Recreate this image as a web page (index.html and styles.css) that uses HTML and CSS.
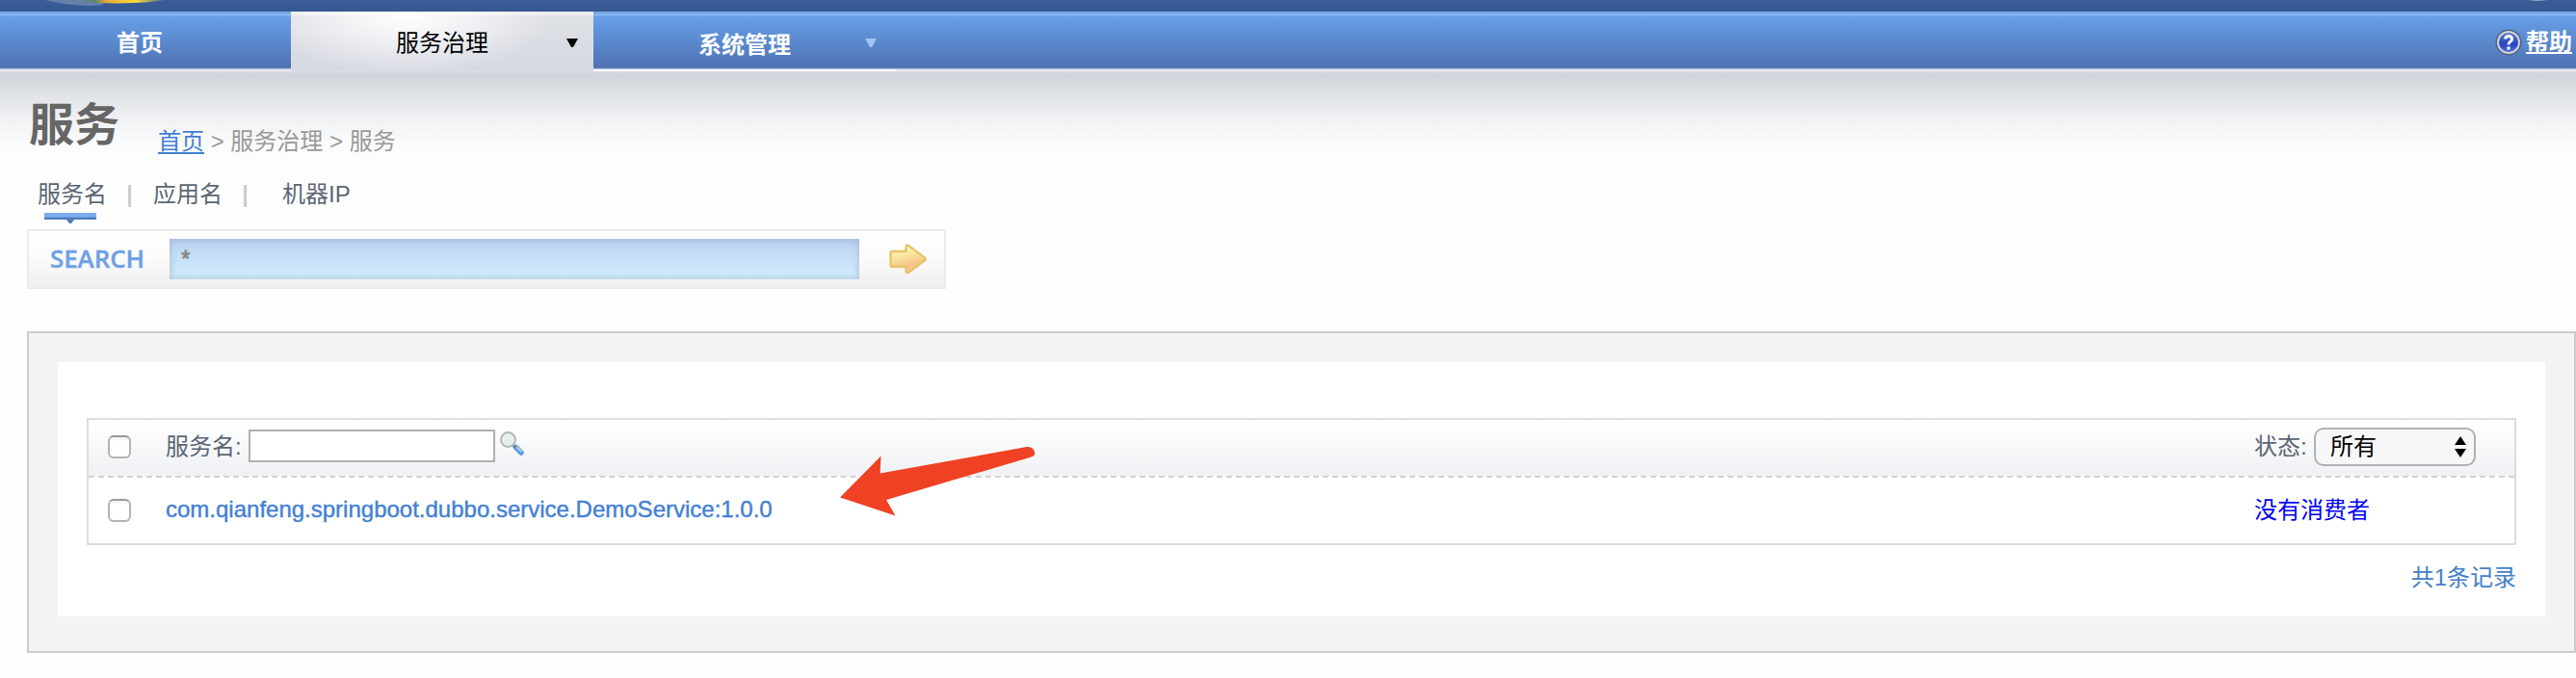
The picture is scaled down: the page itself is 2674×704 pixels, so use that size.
FILE: index.html
```html
<!DOCTYPE html>
<html lang="zh-CN">
<head>
<meta charset="utf-8">
<title>服务</title>
<link rel="stylesheet" href="styles.css">
</head>
<body>
<header class="brand">
<svg class="brand-logo" width="180" height="12" viewBox="0 0 180 12"><defs><linearGradient id="logo"><stop offset="0" stop-color="#6a83ab"/><stop offset=".2" stop-color="#58875b"/><stop offset=".32" stop-color="#e8a83c"/><stop offset=".65" stop-color="#f8dc3c"/><stop offset="1" stop-color="#385b95"/></linearGradient></defs><path d="M45 0Q62 5 90 6Q120 5 92 0Z" fill="#6680aa"/><path d="M78 0Q100 4 122 3.500Q150 3 172 0Z" fill="url(#logo)"/></svg>
<svg class="brand-edge" width="20" height="2" viewBox="0 0 20 2"><path d="M0 0H20Q10 2 0 0Z" fill="#8da2c3"/></svg>
</header>
<nav class="nav">
<a class="nav-item home">首页</a>
<a class="nav-item active">服务治理<svg class="caret" width="12" height="10"><path d="M0 0H12L7 9H5Z" fill="#000"/></svg></a>
<a class="nav-item system">系统管理<svg class="caret" width="12" height="10"><path d="M0 0H12L7 9H5Z" fill="#a2c4f2"/></svg></a>
<a class="help"><svg width="28" height="28" viewBox="0 0 28 28"><defs><linearGradient id="hb" x2="0" y2="1"><stop offset="0" stop-color="#5a75cf"/><stop offset=".6" stop-color="#2746c0"/><stop offset="1" stop-color="#4a72dd"/></linearGradient></defs><circle cx="14" cy="14" r="13.500" fill="#4f6288"/><circle cx="14" cy="14" r="12" fill="#d2d2d6"/><circle cx="14" cy="14" r="10" fill="url(#hb)"/><path d="M10.500 10.500Q11 7.500 14 7.500Q17.500 7.500 17.500 10.500Q17.500 12.500 15.500 13.500Q14 14.300 14 16.500M14 18.500V21.500" fill="none" stroke="#fff" stroke-width="3"/></svg><span>帮助</span></a>
</nav>
<main class="page">
<div class="heading"><h1>服务</h1><div class="crumbs"><a>首页</a> &gt; 服务治理 &gt; 服务</div></div>
<div class="tabs"><span class="tab current">服务名<svg class="marker" width="54" height="12"><defs><linearGradient id="mk" x2="0" y2="1"><stop offset="0" stop-color="#77a9e8"/><stop offset=".35" stop-color="#7fb0ee"/><stop offset=".5" stop-color="#4d7dbb"/></linearGradient></defs><path d="M0 0H54V7H31L28 11H26L23 7H0Z" fill="url(#mk)"/></svg></span><i class="sep"></i><span class="tab">应用名</span><i class="sep"></i><span class="tab last">机器IP</span></div>
<form class="search"><span class="search-label">SEARCH</span><span class="keyword">*</span>
<svg class="go" width="40" height="32" viewBox="0 0 40 32"><defs><linearGradient id="go" x2=".3" y2="1"><stop offset=".15" stop-color="#fdf9bd"/><stop offset=".5" stop-color="#fbe09a"/><stop offset=".8" stop-color="#f7c48c"/></linearGradient></defs><path d="M3 8H17.500V2.500Q18 1 20 2L37.500 15Q38 16 37.500 17L20 30Q18 31 17.500 29V24H3Q1.500 24 1.500 22V10Q1.500 8 3 8Z" fill="url(#go)" stroke="#e5c667" stroke-width="2.400"/></svg></form>
<section class="panel"><div class="panel-body">
<div class="table">
<div class="row head"><i class="check"></i><span class="label">服务名:</span><span class="filter"></span>
<svg class="lens" width="25" height="25" viewBox="0 0 25 25"><path d="M16.500 16.500L22 22" stroke="#5d9bdc" stroke-width="5.500" stroke-linecap="round"/><path d="M17 16L22.500 21" stroke="#a9d3f5" stroke-width="2"/><path d="M13 14L16 17" stroke="#777" stroke-width="2"/><circle cx="8.500" cy="8.500" r="7.500" fill="#e5efed" stroke="#b3b8b8" stroke-width="2"/></svg>
<span class="status">状态: <span class="select">所有<svg width="12" height="22"><path d="M0 9L6 0L12 9ZM0 13H12L6 22Z"/></svg></span></span></div>
<div class="row item"><i class="check"></i><a class="service">com.qianfeng.springboot.dubbo.service.DemoService:1.0.0</a><span class="status none">没有消费者</span></div>
</div>
<div class="total">共1条记录</div>
</div></section>
</main>
<svg class="pointer" width="204" height="74" viewBox="871 462 204 74"><path d="M872 516.500L914.500 473.500L913.500 491.500L1066 464C1072 463 1075 469 1074 472Q1073 474 1069 475L920 519L929.500 535.500Z" fill="#ef4123"/></svg>
</body>
</html>
```
FILE: styles.css
```css
*{box-sizing:border-box}
body{margin:0;width:2674px;height:704px;overflow:hidden;position:relative;background:#fefefe;color:#5b6573;font:24px/30px "Liberation Sans","Noto Sans CJK SC",sans-serif}
svg{display:block;flex:none}
.brand{height:12px;background:linear-gradient(#395d98,#355890);display:flex;justify-content:space-between}
.brand-logo{margin-left:2px}
.brand-edge{margin-right:30px}
.nav{height:62px;display:flex;background:linear-gradient(#7fb0ea 0,#7fb0ea 1px,#669ce2 1px,#669ce2 2px,#87b6ee 2px,#87b6ee 4px,#669fe8 5px,#4f72b3 58px,#6e8fc4 59px,#e4e8ee 60px,#e4e8ee 62px)}
.nav-item{position:relative;display:flex;justify-content:center;padding-top:18px;width:314px;color:#fff;font-weight:bold}
.nav-item.home{width:302px;padding-right:12px}
.nav-item.active{background:linear-gradient(#fff6 0,#fff6 4px,transparent 4px),radial-gradient(ellipse 150px 62px at 120px 4px,#fff 0,#fff0 100%),linear-gradient(#dfe2e6,#d5d9e1);color:#000;font-weight:normal}
.nav-item.system{padding-top:20px;border-bottom:2px solid #fff}
.caret{position:absolute;left:286px;top:28px}
.system .caret{left:282px}
.help{margin-left:auto;padding:18px 4px 0 0;display:flex;gap:4px;color:#fff;font-weight:bold;line-height:28px}
.help span{height:26px;border-bottom:2px solid #fff}
.page{background:linear-gradient(#dfe2e8 0,#cfd3da 2px,#d5d9dd 10px,#e2e5ea 28px,#f0f2f4 50px,#fafbfb 75px,#fefefe 95px);padding-left:28px}
.heading{height:104px;display:flex}
h1{margin:0;width:136px;padding:26px 0 0 2px;font-size:47px;line-height:60px;color:#666;font-weight:bold}
.crumbs{padding-top:58px;color:#999;white-space:pre}
.crumbs a{color:#4380d3;display:inline-block;height:28px;border-bottom:2px solid #4380d3}
.tabs{height:60px;display:flex;padding:9px 0 0 11px}
.tab{position:relative;width:72px;white-space:nowrap}
.marker{position:absolute;left:7px;top:34px}
.sep{width:3px;height:23px;background:#ccc;margin:5px 23px 0 22px}
.last{margin-left:14px}
.search{width:954px;height:62px;display:flex;align-items:center;border:2px solid #e8ecf0;background:linear-gradient(#fff,#fbfbfb 50%,#efefef);margin:0}
.search-label{width:146px;padding:0 0 2px 22px;font:26px/30px "Open Sans",sans-serif;font-weight:600;color:#6fa0e6;letter-spacing:-.1px;-webkit-text-stroke:.4px #6fa0e6}
.keyword{width:716px;height:42px;padding:6px 0 0 12px;background:linear-gradient(#b9d2f0,#c7e2f8 50%,#d2edfb);box-shadow:inset 0 0 8px #8299bd88;color:#888;-webkit-text-stroke:.8px #888}
.go{margin-left:31px}
.panel{margin-top:44px;width:2646px;height:334px;border:2px solid #ccc;background:#f2f4f4;padding:30px}
.panel-body{height:264px;background:#fff;padding:58px 30px 0}
.table{height:132px;border:2px solid #ddd}
.row{display:flex;position:relative}
.head{height:60px;background:linear-gradient(#fff,#eff1f4) padding-box;border-bottom:2px dashed #d3d3d3}
.check{width:24px;height:24px;margin:16px 36px 0 20px;border:2px solid #b4b4b4;border-top-color:#999;border-radius:6px;background:linear-gradient(#f0f0f0,#fff 4px)}
.label{width:86px;padding-top:13px}
.filter{width:256px;height:34px;margin-top:10px;border:2px solid #b0b0b0;background:#fff}
.lens{margin:12px 0 0 5px}
.status{margin-left:auto;width:270px;padding-top:13px;display:flex}
.select{width:168px;height:40px;margin:-5px 0 0 auto;padding:3px 8px 0 15px;display:flex;justify-content:space-between;border:2px solid #b1b1b1;border-radius:10px;background:#f7f7f7;color:#000}
.head .status{width:230px;margin-right:40px}
.select svg{margin-top:4px}
.item .check{margin-top:22px}
.service{color:#4380d3;padding-top:18px;-webkit-text-stroke:.4px #4380d3}
.none{color:#0000f5;padding-top:19px}
.total{color:#437fc7;text-align:right;padding-top:19px}
.pointer{position:absolute;left:871px;top:462px}
```
